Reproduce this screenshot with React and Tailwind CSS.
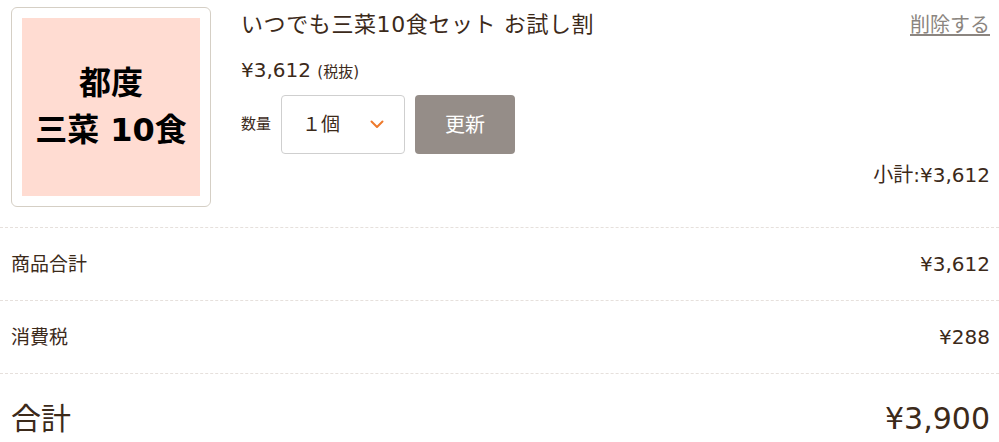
import React from "react";

const font = { fontFamily: '"DejaVu Sans", "Noto Sans CJK JP", sans-serif' };

function SummaryRow({ label, value }) {
  return (
    <div className="flex h-[73px] items-center justify-between border-t border-dashed border-[#e6e0dc] pl-[11px] pr-[9px]">
      <span className="text-[19px]">{label}</span>
      <span className="text-[20px]">{value}</span>
    </div>
  );
}

export default function App() {
  return (
    <div className="w-[999px] h-[442px] overflow-hidden bg-white text-[#3c2a1a]" style={font}>
      {/* ===== CART ITEM ===== */}
      <div className="flex pl-[11px] pr-[9px] pt-[7px] pb-[20px]">
        <div className="w-[200px] h-[200px] shrink-0 rounded-[6px] border border-[#d5cfc5] p-[10px]">
          <div className="flex h-full w-full flex-col items-center justify-center bg-[#ffdcd2] text-[32px] font-bold leading-[47px] text-black">
            <span>都度</span>
            <span>三菜 10食</span>
          </div>
        </div>

        <div className="ml-[30px] flex flex-1 flex-col">
          <div className="mt-[3px] flex items-start justify-between">
            <h1 className="text-[22px] leading-[30px] tracking-[0.6px]">いつでも三菜10食セット お試し割</h1>
            <a href="#" className="text-[20px] leading-[30px] text-[#8b8580] underline underline-offset-2">
              削除する
            </a>
          </div>

          <p className="mt-[15px] text-[20px] leading-[30px]">
            ¥3,612 <span className="text-[15px]">(税抜)</span>
          </p>

          <div className="mt-[8px] flex items-center">
            <span className="text-[15px]">数量</span>
            <div className="ml-[10px] flex h-[59px] w-[124px] items-center justify-between rounded-[4px] border border-[#cfcfcf] pl-[20px] pr-[20px]">
              <span className="text-[19px]">１個</span>
              <svg width="14" height="9" viewBox="0 0 14 9" fill="none">
                <path d="M1.5 1.5 L7 7 L12.5 1.5" stroke="#ee7a2c" strokeWidth="2" strokeLinecap="round" strokeLinejoin="round" />
              </svg>
            </div>
            <button className="ml-[10px] flex h-[59px] w-[100px] items-center justify-center rounded-[4px] bg-[#958d88] text-[20px] text-white">
              更新
            </button>
          </div>

          <p className="mt-[6px] text-right text-[20px] leading-[30px]">小計:¥3,612</p>
        </div>
      </div>

      {/* ===== TOTALS ===== */}
      <SummaryRow label="商品合計" value="¥3,612" />
      <SummaryRow label="消費税" value="¥288" />
      <div className="flex items-center justify-between border-t border-dashed border-[#e6e0dc] pl-[11px] pr-[9px] pt-[29px]">
        <span className="text-[30px] leading-[32px]">合計</span>
        <span className="text-[30px] leading-[32px]">¥3,900</span>
      </div>
    </div>
  );
}
